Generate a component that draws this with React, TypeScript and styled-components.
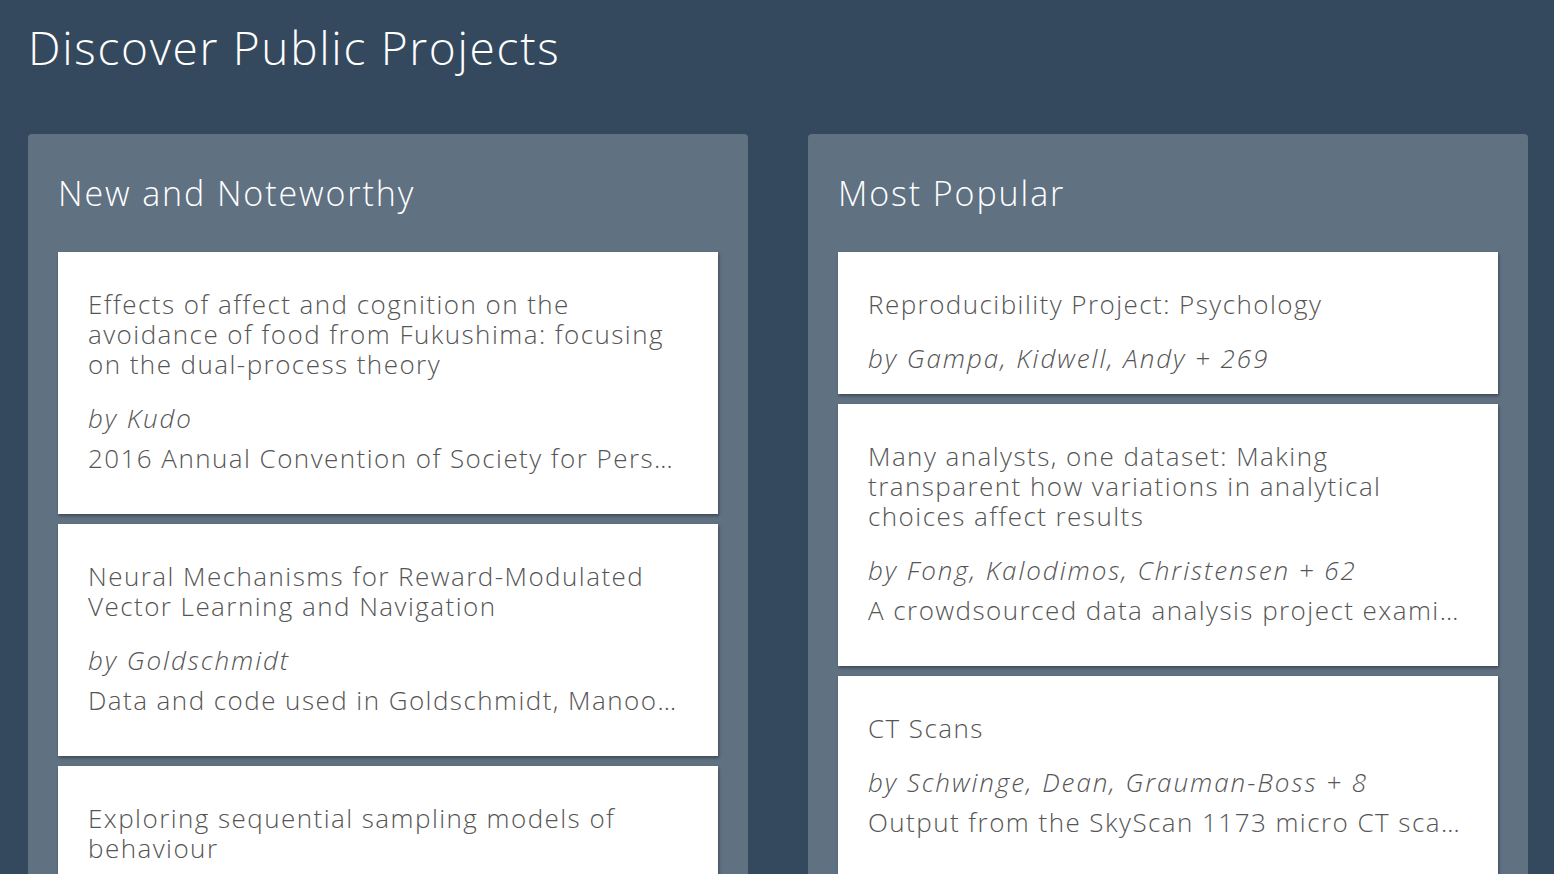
import React from "react";
import styled, { createGlobalStyle } from "styled-components";

const Global = createGlobalStyle`
  html, body { margin: 0; padding: 0; background: #34495e; }
  body { font-family: "Open Sans", "Noto Sans", sans-serif; font-weight: 300; }
`;

const Page = styled.div`
  padding: 0 26px 0 28px;
`;

const Title = styled.h1`
  margin: 16px 0 56px 0;
  font-size: 46px;
  font-weight: 300;
  letter-spacing: 1.7px;
  line-height: normal;
  color: #ffffff;
`;

const Columns = styled.div`
  display: grid;
  grid-template-columns: 720px 720px;
  column-gap: 60px;
`;

const Panel = styled.section`
  background: #607182;
  border-radius: 4px;
  padding: 36px 30px 30px;
`;

const PanelTitle = styled.h2`
  margin: 0 0 36px 0;
  font-size: 34px;
  font-weight: 300;
  letter-spacing: 1.9px;
  line-height: normal;
  color: #ffffff;
`;

const CardList = styled.div`
  display: flex;
  flex-direction: column;
  gap: 10px;
`;

const Card = styled.article`
  background: #ffffff;
  padding: 37px 30px 16px;
  box-shadow: 1px 2px 3px rgba(0, 0, 0, 0.35);
  color: #555555;
`;

const CardTitle = styled.h3`
  margin: 0;
  font-size: 26px;
  font-weight: 300;
  letter-spacing: 1.45px;
  line-height: 30px;
`;

const Authors = styled.p`
  margin: 19px 0 0;
  font-size: 26px;
  font-style: italic;
  letter-spacing: 1.95px;
  line-height: 40px;
`;

const Description = styled.p`
  margin: 0 0 20px;
  font-size: 26px;
  letter-spacing: 1.45px;
  line-height: 40px;
  white-space: nowrap;
  overflow: hidden;
  text-overflow: ellipsis;
`;

type Project = { title: string; authors?: string; description?: string };

const noteworthy: Project[] = [
  {
    title:
      "Effects of affect and cognition on the avoidance of food from Fukushima: focusing on the dual-process theory",
    authors: "by Kudo",
    description:
      "2016 Annual Convention of Society for Personality and Social Psychology",
  },
  {
    title: "Neural Mechanisms for Reward-Modulated Vector Learning and Navigation",
    authors: "by Goldschmidt",
    description: "Data and code used in Goldschmidt, Manoonpong and Dasgupta",
  },
  {
    title: "Exploring sequential sampling models of behaviour",
  },
];

const popular: Project[] = [
  {
    title: "Reproducibility Project: Psychology",
    authors: "by Gampa, Kidwell, Andy + 269",
  },
  {
    title:
      "Many analysts, one dataset: Making transparent how variations in analytical choices affect results",
    authors: "by Fong, Kalodimos, Christensen + 62",
    description: "A crowdsourced data analysis project examining skin tone and red cards",
  },
  {
    title: "CT Scans",
    authors: "by Schwinge, Dean, Grauman-Boss + 8",
    description: "Output from the SkyScan 1173 micro CT scanner",
  },
];

function ProjectCard({ p }: { p: Project }) {
  return (
    <Card>
      <CardTitle>{p.title}</CardTitle>
      {p.authors && <Authors>{p.authors}</Authors>}
      {p.description && <Description>{p.description}</Description>}
    </Card>
  );
}

export default function App() {
  return (
    <Page>
      <Global />
      <Title>Discover Public Projects</Title>
      <Columns>
        <Panel>
          <PanelTitle>New and Noteworthy</PanelTitle>
          <CardList>
            {noteworthy.map((p) => (
              <ProjectCard key={p.title} p={p} />
            ))}
          </CardList>
        </Panel>
        <Panel>
          <PanelTitle>Most Popular</PanelTitle>
          <CardList>
            {popular.map((p) => (
              <ProjectCard key={p.title} p={p} />
            ))}
          </CardList>
        </Panel>
      </Columns>
    </Page>
  );
}
